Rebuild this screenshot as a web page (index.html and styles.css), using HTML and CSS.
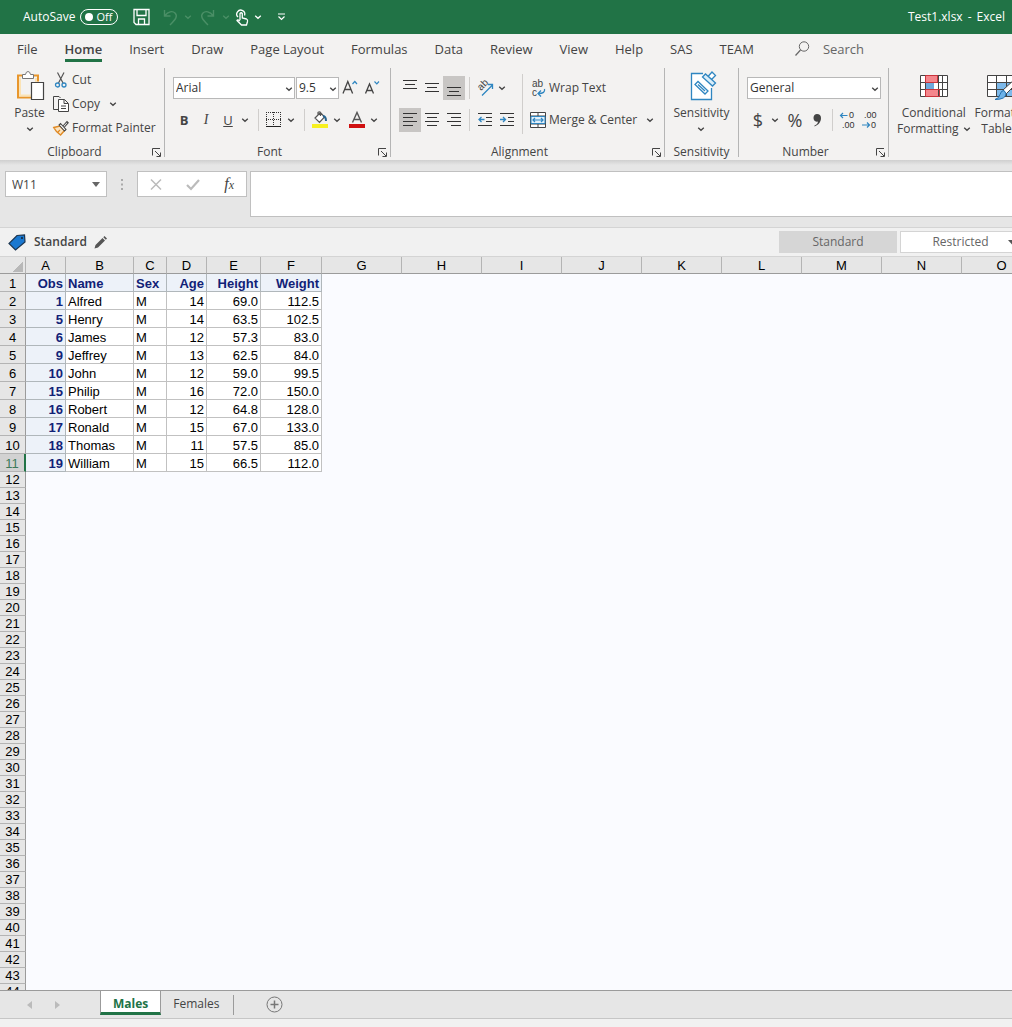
FILE: index.html
```
<!DOCTYPE html>
<html lang="en">
<head>
    <meta charset="UTF-8">
    <meta name="viewport" content="width=device-width, initial-scale=1.0">
    <title>Test1.xlsx - Excel</title>
    <link rel="stylesheet" href="styles.css">
</head>
<body>
    <svg class="sprite" aria-hidden="true">
        <symbol id="chevron" viewBox="0 0 8 8"><path d="M1.2 2.7 4 5.3 6.8 2.7" fill="none" stroke="currentColor" stroke-width="1.3"/></symbol>
        <symbol id="launcher" viewBox="0 0 9 9"><path d="M.5 7.5V.5H8M3 3l5 5M8.500 4.500v4h-4" fill="none" stroke="currentColor"/></symbol>
    </svg>

    <div class="app">
        <header class="titlebar">
            <label class="autosave">AutoSave
                <span class="toggle"><input type="checkbox"><span>Off</span></span>
            </label>
            <div class="quick-access">
                <button class="qa-save" aria-label="Save"><svg width="17" height="18" viewBox="0 0 17 18"><path d="M1 1.500h15v15H3l-2-2zM4 1.500v6h9v-6M5.500 16v-5h6v5" fill="none" stroke="currentColor" stroke-width="1.3"/></svg></button>
                <button class="dim" aria-label="Undo"><svg width="16" height="17" viewBox="0 0 16 17"><path d="M1.500 1v6h6M2 6.500C5 2.500 9.500 1.500 12 4c3 3 1 6-5 12" fill="none" stroke="currentColor" stroke-width="1.4"/></svg></button>
                <button class="dim" aria-label="Undo list"><svg width="8" height="8"><use href="#chevron"/></svg></button>
                <button class="dim" aria-label="Redo"><svg width="16" height="17" viewBox="0 0 16 17"><path d="M14.500 1v6h-6M14 6.500C11 2.500 6.500 1.500 4 4c-3 3-1 6 5 12" fill="none" stroke="currentColor" stroke-width="1.4"/></svg></button>
                <button class="dim" aria-label="Redo list"><svg width="8" height="8"><use href="#chevron"/></svg></button>
                <button aria-label="Touch mode"><svg width="14" height="17" viewBox="0 0 14 17"><path d="M3 8A4 4 0 1 1 9.500 6.500M5 11V4.500q1.200-1.500 2.300 0V9l4.200 1q1.500.5 1 2.500L11.500 16h-5L2 11.500q.5-1.500 3 .5" fill="none" stroke="currentColor" stroke-width="1.3"/></svg></button>
                <button aria-label="Touch mode list"><svg width="8" height="8"><use href="#chevron"/></svg></button>
                <button class="customize" aria-label="Customize toolbar"><svg width="9" height="8" viewBox="0 0 9 8"><path d="M1 1h7M1.500 3.500l3 3 3-3" fill="none" stroke="currentColor" stroke-width="1.2"/></svg></button>
            </div>
            <div class="doc-title"><span>Test1.xlsx</span><span>-</span><span>Excel</span></div>
        </header>

        <nav class="tabs">
            <button>File</button>
            <button class="active">Home</button>
            <button>Insert</button>
            <button>Draw</button>
            <button>Page Layout</button>
            <button>Formulas</button>
            <button>Data</button>
            <button>Review</button>
            <button>View</button>
            <button>Help</button>
            <button>SAS</button>
            <button>TEAM</button>
            <button class="search"><svg width="15" height="15" viewBox="0 0 15 15"><circle cx="9" cy="5.500" r="4.700" fill="none" stroke="currentColor"/><path d="M5.500 9 .5 14.500" stroke="currentColor" stroke-width="1.2"/></svg>Search</button>
        </nav>

        <section class="ribbon">
            <div class="group clipboard">
                <div class="group-body">
                    <button class="big paste">
                        <svg width="28" height="30" viewBox="0 0 28 30"><path d="M6 4.500H2v22h13M18 4.500h4v6" fill="none" stroke="#e8962c" stroke-width="2"/><path d="M4 6.500v18h11M20 7v4" fill="none" stroke="#fbe3b5" stroke-width="2"/><path d="M6.500 7.500v-4h3q.5-3 2.500-3t2.500 3h3v4z" fill="#fff" stroke="#777"/><path d="M15.500 11.500h12v17h-12z" fill="#fff" stroke="#444" stroke-width="1.2"/></svg>
                        <span>Paste</span>
                        <svg width="8" height="8"><use href="#chevron"/></svg>
                    </button>
                    <div class="stack">
                        <button class="tool"><svg width="16" height="16" viewBox="0 0 16 16"><path d="M4.500.5 10 11M11 .5 5.500 11" stroke="#555" stroke-width="1.2"/><circle cx="4.500" cy="13" r="2" fill="none" stroke="#2f86c1" stroke-width="1.3"/><circle cx="11" cy="13" r="2" fill="none" stroke="#2f86c1" stroke-width="1.3"/></svg>Cut</button>
                        <button class="tool"><svg width="16" height="16" viewBox="0 0 16 16"><path d="M5 13.500H.5V.5H6l1.500 1.500" fill="none" stroke="#444"/><path d="M5.500 3.500h6l4 4v8h-10zM11 3.500v4h4M8 10h5M8 12.500h5" fill="#fff" stroke="#444"/></svg>Copy<svg class="after" width="8" height="8"><use href="#chevron"/></svg></button>
                        <button class="tool"><svg width="16" height="16" viewBox="0 0 16 16"><path d="M.7 7.500 7 6l4.500 4.500L7.500 15Q3 12 .7 7.500z" fill="#fbe3c0" stroke="#e08a24" stroke-width="1.400"/><path d="M4.500 12.500 7 10" stroke="#e08a24" stroke-width="1.200"/><path d="m6 5 5.500 6L13 9.500l-5.500-6zM10 6l4-4.500 1.200 1.200L11.500 7" fill="#fff" stroke="#444" stroke-width="1.100"/></svg>Format Painter</button>
                    </div>
                </div>
                <div class="group-name"><span>Clipboard</span><button class="launcher" aria-label="Clipboard settings"><svg width="9" height="9"><use href="#launcher"/></svg></button></div>
            </div>

            <div class="group font">
                <div class="group-body rows">
                    <div class="row">
                        <div class="combo combo-font"><select aria-label="Font"><option>Arial</option></select><svg width="8" height="8"><use href="#chevron"/></svg></div>
                        <div class="combo combo-size"><select aria-label="Font size"><option>9.5</option></select><svg width="8" height="8"><use href="#chevron"/></svg></div>
                        <button class="ico" aria-label="Grow font"><svg width="16" height="16" viewBox="0 0 16 16"><path d="M1 13.500 5.800 1.500l4.800 12M2.800 9.500h6" fill="none" stroke="#444" stroke-width="1.300"/><path d="m10.500 4 2.300-2.500L15 4" fill="none" stroke="#2f86c1" stroke-width="1.200"/></svg></button>
                        <button class="ico" aria-label="Shrink font"><svg width="16" height="16" viewBox="0 0 16 16"><path d="m1.500 13.500 4-9.500 4 9.500M3 10.500h5" fill="none" stroke="#444" stroke-width="1.300"/><path d="m10.500 1.500 2.300 2.300L15 1.500" fill="none" stroke="#2f86c1" stroke-width="1.200"/></svg></button>
                    </div>
                    <div class="row">
                        <button class="ico letter bold">B</button>
                        <button class="ico letter italic">I</button>
                        <button class="ico letter underline">U</button>
                        <button class="drop" aria-label="Underline styles"><svg width="8" height="8"><use href="#chevron"/></svg></button>
                        <i class="sep"></i>
                        <button class="ico" aria-label="Borders"><svg width="16" height="16" viewBox="0 0 16 16"><path d="M0 .5h15M0 7.500h15M.5 0v13M7.500 0v13M14.500 0v13" stroke="#333" stroke-dasharray="1 1"/><path d="M0 14.500h15" stroke="#222"/></svg></button>
                        <button class="drop" aria-label="Border styles"><svg width="8" height="8"><use href="#chevron"/></svg></button>
                        <i class="sep"></i>
                        <button class="ico" aria-label="Fill color"><svg width="16" height="18" viewBox="0 0 16 18"><path d="M8.500 1.500 3 7l4.500 4.500L12.500 6zM6 4V1.500q1.500-1.500 2.500 0V5" fill="#fff" stroke="#555" stroke-width="1.200"/><path d="M11 5q3 .5 3 5" fill="none" stroke="#25638f" stroke-width="2"/><path d="M0 13h16v4H0z" fill="#f7f020"/></svg></button>
                        <button class="drop" aria-label="Fill colors"><svg width="8" height="8"><use href="#chevron"/></svg></button>
                        <button class="ico" aria-label="Font color"><svg width="16" height="18" viewBox="0 0 16 18"><path d="M3.500 11.500 8 1.500l4.500 10M5 8.500h6" fill="none" stroke="#555" stroke-width="1.400"/><path d="M0 13h16v4H0z" fill="#d01010"/></svg></button>
                        <button class="drop" aria-label="Font colors"><svg width="8" height="8"><use href="#chevron"/></svg></button>
                    </div>
                </div>
                <div class="group-name"><span>Font</span><button class="launcher" aria-label="Font settings"><svg width="9" height="9"><use href="#launcher"/></svg></button></div>
            </div>

            <div class="group alignment">
                <div class="group-body">
                    <div class="rows">
                        <div class="row">
                            <button class="ico" aria-label="Top align"><svg width="14" height="18" viewBox="0 0 14 18"><path d="M0 1.500h14M2 5.500h10M0 9.500h14" stroke="#333"/></svg></button>
                            <button class="ico" aria-label="Middle align"><svg width="14" height="18" viewBox="0 0 14 18"><path d="M0 4.500h14M2 8.500h10M0 12.500h14" stroke="#333"/></svg></button>
                            <button class="ico pressed" aria-label="Bottom align"><svg width="14" height="18" viewBox="0 0 14 18"><path d="M0 8.500h14M2 12.500h10M0 16.500h14" stroke="#333"/></svg></button>
                            <i class="sep"></i>
                            <button class="ico" aria-label="Orientation"><svg width="18" height="18" viewBox="0 0 18 18"><text x="0" y="0" transform="translate(5 12) rotate(-45)" class="glyph-ab">ab</text><path d="M6 16.500 16.500 6M12 5.500h4.500V10" fill="none" stroke="#2f86c1" stroke-width="1.300"/></svg></button>
                            <button class="drop" aria-label="Orientation list"><svg width="8" height="8"><use href="#chevron"/></svg></button>
                        </div>
                        <div class="row">
                            <button class="ico pressed" aria-label="Align left"><svg width="14" height="14" viewBox="0 0 14 14"><path d="M0 .5h14M0 4.500h10M0 8.500h14M0 12.500h10" stroke="#333"/></svg></button>
                            <button class="ico" aria-label="Center"><svg width="14" height="14" viewBox="0 0 14 14"><path d="M0 .5h14M2 4.500h10M0 8.500h14M2 12.500h10" stroke="#333"/></svg></button>
                            <button class="ico" aria-label="Align right"><svg width="14" height="14" viewBox="0 0 14 14"><path d="M0 .5h14M4 4.500h10M0 8.500h14M4 12.500h10" stroke="#333"/></svg></button>
                            <i class="sep"></i>
                            <button class="ico" aria-label="Decrease indent"><svg width="14" height="14" viewBox="0 0 14 14"><path d="M0 .5h14M8 4.500h6M8 8.500h6M0 12.500h14" stroke="#333"/><path d="M6.500 6.500H1M3.500 4 1 6.500 3.500 9" fill="none" stroke="#2f86c1" stroke-width="1.300"/></svg></button>
                            <button class="ico" aria-label="Increase indent"><svg width="14" height="14" viewBox="0 0 14 14"><path d="M0 .5h14M8 4.500h6M8 8.500h6M0 12.500h14" stroke="#333"/><path d="M0 6.500h5.500M3 4l2.500 2.500L3 9" fill="none" stroke="#2f86c1" stroke-width="1.300"/></svg></button>
                        </div>
                    </div>
                    <i class="sep tall"></i>
                    <div class="rows">
                        <div class="row"><button class="tool"><svg width="16" height="17" viewBox="0 0 16 17"><text x="2" y="7" class="glyph-ab">ab</text><text x="2" y="16" class="glyph-ab">c</text><path d="M14.500 9q1 4.500-6 4.500M11 10.500 8 13.500l3 3" fill="none" stroke="#2f86c1" stroke-width="1.300"/></svg>Wrap Text</button></div>
                        <div class="row"><button class="tool merge"><svg width="16" height="16" viewBox="0 0 16 16"><path d="M.5.500h15v15H.5z" fill="#fff" stroke="#444"/><path d="M.5 4h15M.5 12h15M8 .5V4M8 12v3.500" stroke="#444"/><path d="M1 4.500h14v7H1z" fill="#e3f1fb" stroke="#2f86c1"/><path d="M3 8h10M5 6 3 8l2 2M11 6l2 2-2 2" fill="none" stroke="#2f86c1" stroke-width="1.200"/></svg>Merge &amp; Center<svg class="after" width="8" height="8"><use href="#chevron"/></svg></button></div>
                    </div>
                </div>
                <div class="group-name"><span>Alignment</span><button class="launcher" aria-label="Alignment settings"><svg width="9" height="9"><use href="#launcher"/></svg></button></div>
            </div>

            <div class="group sensitivity">
                <div class="group-body">
                    <button class="big">
                        <svg width="28" height="30" viewBox="0 0 28 30"><path d="M16 2.500H4.500v26h20V17" fill="#fff" stroke="#2f86c1" stroke-width="1.300"/><path d="m8 13.500 3-3 10 9.500-3 3zM11 13.500l7 6.500" fill="#fff" stroke="#2f86c1" stroke-width="1.300"/><path d="m21 5.500 4-4.500 3.500 3.500-4 4z" fill="#fff" stroke="#2f86c1" stroke-width="1.300"/><path d="m15.500 6 3-3L28.500 12l-3 3z" fill="#d9edf9" stroke="#2f86c1" stroke-width="1.300"/></svg>
                        <span>Sensitivity</span>
                        <svg width="8" height="8"><use href="#chevron"/></svg>
                    </button>
                </div>
                <div class="group-name plain"><span>Sensitivity</span></div>
            </div>

            <div class="group number">
                <div class="group-body rows">
                    <div class="row">
                        <div class="combo combo-format"><select aria-label="Number format"><option>General</option></select><svg width="8" height="8"><use href="#chevron"/></svg></div>
                    </div>
                    <div class="row">
                        <button class="ico sign">$</button>
                        <button class="drop" aria-label="Currency list"><svg width="8" height="8"><use href="#chevron"/></svg></button>
                        <button class="ico sign">%</button>
                        <button class="ico" aria-label="Comma style"><svg width="8" height="14" viewBox="0 0 8 14"><path d="M4 1C6.500 1 8 2.500 8 5c0 4-2.500 7-6.500 8.500v-1C4 11.500 5 10 5 8.500 2 9.500.5 7 .5 4.800.5 2.500 2 1 4 1z" fill="#444"/></svg></button>
                        <i class="sep"></i>
                        <button class="ico" aria-label="Increase decimal"><svg width="16" height="16" viewBox="0 0 16 16"><text x="9" y="6" class="glyph-num">0</text><text x="2" y="16" class="glyph-num">.00</text><path d="M7.500 3.500H.5M3 1 .5 3.500 3 6" fill="none" stroke="#2f86c1" stroke-width="1.200"/></svg></button>
                        <button class="ico" aria-label="Decrease decimal"><svg width="16" height="16" viewBox="0 0 16 16"><text x="2" y="6" class="glyph-num">.00</text><text x="9" y="16" class="glyph-num">0</text><path d="M0 13h7.500M5 10.500 7.500 13 5 15.500" fill="none" stroke="#2f86c1" stroke-width="1.200"/></svg></button>
                    </div>
                </div>
                <div class="group-name"><span>Number</span><button class="launcher" aria-label="Number settings"><svg width="9" height="9"><use href="#launcher"/></svg></button></div>
            </div>

            <div class="group styles">
                <div class="group-body">
                    <button class="big">
                        <svg width="28" height="30" viewBox="0 0 28 30"><path d="M.5 4.500h27v21H.5z" fill="#fff"/><path d="M6 4.500h12v7H6zM6 18.500h14v7H6z" fill="#f4868c"/><path d="M6 11.500h8v7H6z" fill="#6fa8dc"/><path d="M.5 4.500h27v21H.5zM.5 11.500h27M.5 18.500h27M5.500 4.500v21M18.500 4.500v21M22.500 4.500v21" fill="none" stroke="#444"/><path d="M5.500 4.500h12v7h-12zM5.500 18.500h14v7h-14z" fill="none" stroke="#c9343c"/></svg>
                        <span>Conditional</span>
                        <span>Formatting <svg width="8" height="8"><use href="#chevron"/></svg></span>
                    </button>
                    <button class="big">
                        <svg width="32" height="30" viewBox="0 0 32 30"><path d="M.5 4.500h29v21H.5z" fill="#fff"/><path d="M10 11.500h20v14H10z" fill="#7db9ea"/><path d="M.5 4.500h29v21H.5zM.5 11.500h29M.5 18.500h29M9.500 4.500v21M19.500 4.500v21" fill="none" stroke="#444"/><path d="M28 8 16 19l3 4L31 11z" fill="#fff" stroke="#444"/><path d="M8 28.500q4-1 5-5 1-4 4-4l2 3q0 6-11 6z" fill="#6cb2e8" stroke="#2672b0"/></svg>
                        <span>Format as</span>
                        <span>Table <svg width="8" height="8"><use href="#chevron"/></svg></span>
                    </button>
                </div>
            </div>
        </section>

        <section class="formula-bar">
            <div class="name-box">
                <input type="text" value="W11" aria-label="Name box">
                <button aria-label="Named ranges"><svg width="8" height="5" viewBox="0 0 8 5"><path d="M0 0h8L4 5z" fill="#666"/></svg></button>
            </div>
            <svg class="grip" width="3" height="11" viewBox="0 0 3 11"><path d="M0 0h2v2H0zM0 4.500h2v2H0zM0 9h2v2H0z" fill="#aaa"/></svg>
            <div class="entry-buttons">
                <button aria-label="Cancel"><svg width="12" height="11" viewBox="0 0 12 11"><path d="m1 .5 10 10M11 .5l-10 10" stroke="#bbb" stroke-width="1.500"/></svg></button>
                <button aria-label="Enter"><svg width="14" height="11" viewBox="0 0 14 11"><path d="m1 6 4 4 8-9" fill="none" stroke="#bbb" stroke-width="2.200"/></svg></button>
                <button class="fx" aria-label="Insert function">f<small>x</small></button>
            </div>
            <textarea aria-label="Formula bar"></textarea>
        </section>

        <section class="label-bar">
            <svg width="18" height="17" viewBox="0 0 18 17"><path d="M9 1.500 16.500 1l.5 7-9.500 8L1 9.500z" fill="#1a78d0" stroke="#1c3550" stroke-width="1.200"/><circle cx="14" cy="4" r="1" fill="#123"/></svg>
            <b>Standard</b>
            <button class="edit" aria-label="Edit label"><svg width="13" height="13" viewBox="0 0 13 13"><path d="m.5 12.500 1-3.500 7-7 2.500 2.500-7 7zM9.300 1.300 10.500 0 13 2.500l-1.200 1.200z" fill="#555"/></svg></button>
            <div class="labels">
                <button class="current">Standard</button>
                <button class="restricted"><span>Restricted</span><svg width="8" height="5" viewBox="0 0 8 5"><path d="M0 0h8L4 4.500z" fill="#555"/></svg></button>
            </div>
        </section>

        <main class="sheet">
            <table>
                <colgroup>
                    <col class="w-head"><col class="w-a"><col class="w-b"><col class="w-c"><col class="w-a"><col class="w-e"><col class="w-f">
                    <col span="9" class="w-default">
                </colgroup>
                <thead><tr id="letters"></tr></thead>
                <tbody id="cells"></tbody>
            </table>
        </main>

        <footer class="sheet-tabs">
            <button class="scroll" aria-label="Previous sheet"><svg width="5" height="8" viewBox="0 0 5 8"><path d="M5 0v8L0 4z" fill="#bbb"/></svg></button>
            <button class="scroll" aria-label="Next sheet"><svg width="5" height="8" viewBox="0 0 5 8"><path d="M0 0v8l5-4z" fill="#bbb"/></svg></button>
            <button class="sheet-tab selected">Males</button>
            <button class="sheet-tab">Females</button>
            <button class="add" aria-label="New sheet"><svg width="17" height="17" viewBox="0 0 17 17"><circle cx="8.500" cy="8.500" r="7.500" fill="none" stroke="#777"/><path d="M8.500 4.500v8M4.500 8.500h8" stroke="#777" stroke-width="1.500"/></svg></button>
        </footer>
        <div class="status"></div>
    </div>

    <script>
        const letters = ["A", "B", "C", "D", "E", "F", "G", "H", "I", "J", "K", "L", "M", "N", "O"];
        const data = [
            ["Obs", "Name", "Sex", "Age", "Height", "Weight"],
            ["1", "Alfred", "M", "14", "69.0", "112.5"],
            ["5", "Henry", "M", "14", "63.5", "102.5"],
            ["6", "James", "M", "12", "57.3", "83.0"],
            ["9", "Jeffrey", "M", "13", "62.5", "84.0"],
            ["10", "John", "M", "12", "59.0", "99.5"],
            ["15", "Philip", "M", "16", "72.0", "150.0"],
            ["16", "Robert", "M", "12", "64.8", "128.0"],
            ["17", "Ronald", "M", "15", "67.0", "133.0"],
            ["18", "Thomas", "M", "11", "57.5", "85.0"],
            ["19", "William", "M", "15", "66.5", "112.0"]
        ];
        const activeRow = 11;
        const rowCount = 44;

        // Column letters
        document.getElementById("letters").innerHTML =
            '<th class="corner"></th>' + letters.map(l => `<th>${l}</th>`).join("");

        // Data rows first, then empty rows down to the bottom of the sheet
        let html = "";
        for (let r = 1; r <= rowCount; r++) {
            const values = data[r - 1];
            html += `<tr class="${values ? "filled" : "empty"}${r === activeRow ? " current-row" : ""}"><th>${r}</th>`;
            if (values) {
                values.forEach((value, c) => {
                    const header = r === 1 || c === 0;
                    const left = c === 1 || c === 2;
                    html += `<td class="${header ? "header" : "value"}${left ? " left" : ""}">${value}</td>`;
                });
                html += '<td class="blank" colspan="9"></td></tr>';
            } else {
                html += '<td class="blank" colspan="15"></td></tr>';
            }
        }
        document.getElementById("cells").innerHTML = html;
    </script>
</body>
</html>
```
FILE: styles.css
```
* {
    box-sizing: border-box;
}

body {
    margin: 0;
    font-family: "Open Sans", "Noto Sans", sans-serif;
    font-size: 12px;
    line-height: 16px;
    color: #444;
    background: #e6e6e6;
}

button {
    padding: 0;
    border: none;
    background: none;
    color: inherit;
    font: inherit;
    white-space: nowrap;
}

button svg {
    display: block;
    flex: none;
    overflow: visible;
}

.sprite {
    display: none;
}

.app {
    display: flex;
    flex-direction: column;
    height: 100vh;
    overflow: hidden;
}

/* Title bar */
.titlebar {
    flex: none;
    display: flex;
    align-items: center;
    height: 34px;
    padding: 0 7px 0 23px;
    background: #217346;
    color: #fff;
}

.autosave {
    display: flex;
    align-items: center;
    gap: 5px;
}

.toggle {
    position: relative;
    display: flex;
    justify-content: flex-end;
    align-items: center;
    width: 38px;
    height: 16px;
    padding-right: 5px;
    border: 1px solid #fff;
    border-radius: 8px;
    font-size: 11px;
}

.toggle input {
    position: absolute;
    left: 4px;
    top: 3px;
    width: 8px;
    height: 8px;
    margin: 0;
    appearance: none;
    border-radius: 50%;
    background: #fff;
}

.quick-access {
    display: flex;
    align-items: center;
    gap: 5px;
    margin-left: 15px;
}

.qa-save {
    margin-right: 8px;
}

.quick-access .dim {
    color: #4a8f66;
}

.dim + .dim + .dim {
    margin-left: 2px;
}

.customize {
    margin-left: 10px;
}

.doc-title {
    display: flex;
    gap: 5px;
    margin-left: auto;
}

/* Ribbon tabs */
.tabs {
    flex: none;
    display: flex;
    gap: 27px;
    height: 34px;
    padding: 0 17px;
    background: #f3f2f1;
    font-size: 13px;
}

.tabs button {
    height: 28px;
    padding-top: 4px;
    border-bottom: 3px solid transparent;
}

.tabs .active {
    border-color: #217346;
    font-weight: 600;
}

.tabs .search {
    display: flex;
    align-items: center;
    gap: 13px;
    margin-left: 14px;
    color: #666;
}

/* Ribbon */
.ribbon {
    flex: none;
    display: flex;
    height: 92px;
    background: #f3f2f1;
    overflow: hidden;
}

.group {
    flex: none;
    display: flex;
    flex-direction: column;
    height: 89px;
    border-right: 1px solid #b5b5b5;
}

.group-body {
    flex: none;
    display: flex;
    height: 75px;
}

.clipboard {
    width: 165px;
    padding-left: 9px;
}

.font {
    width: 226px;
    padding-left: 8px;
}

.alignment {
    width: 274px;
    padding-left: 8px;
}

.sensitivity {
    width: 74px;
}

.sensitivity .group-body {
    justify-content: center;
}

.number {
    width: 150px;
    padding-left: 8px;
}

.styles {
    padding-left: 6px;
    border-right: none;
}

.group-name {
    flex: none;
    display: flex;
    align-items: center;
    justify-content: center;
    position: relative;
    height: 17px;
    padding-right: 24px;
}

.group-name.plain {
    padding-right: 0;
}

.launcher {
    position: absolute;
    right: 3px;
    top: 5px;
}

.big {
    display: flex;
    flex-direction: column;
    align-items: center;
    padding: 3px 2px 0;
}

.big > svg:first-child {
    margin-bottom: 4px;
}

.big span {
    display: flex;
    align-items: center;
    gap: 4px;
}

.big span + svg {
    margin-top: 4px;
}

.paste {
    width: 41px;
}

.tool {
    display: flex;
    align-items: center;
    gap: 3px;
    height: 24px;
    padding: 0 3px;
}

.tool .after {
    margin-left: 6px;
}

.rows {
    display: flex;
    flex-direction: column;
    padding-top: 4px;
}

.row {
    display: flex;
    align-items: center;
    height: 32px;
}

.ico {
    display: flex;
    align-items: center;
    justify-content: center;
    width: 22px;
    height: 24px;
}

.pressed {
    background: #c8c6c4;
}

.drop {
    display: flex;
    justify-content: center;
    width: 12px;
    margin-right: 3px;
}

.sep {
    width: 1px;
    height: 22px;
    margin: 0 4px;
    background: #d0cecc;
}

.sep.tall {
    height: 60px;
    margin-top: 6px;
}

.combo {
    position: relative;
    margin-right: 1px;
}

.combo select {
    display: block;
    width: 100%;
    height: 22px;
    padding: 0 2px;
    appearance: none;
    border: 1px solid #b8b8b8;
    border-radius: 0;
    background: #fff;
    color: #333;
    font: inherit;
}

.combo svg {
    position: absolute;
    right: 2px;
    top: 8px;
    pointer-events: none;
}

.combo-font {
    width: 122px;
}

.combo-size {
    width: 43px;
    margin-right: 0;
}

.combo-format {
    width: 134px;
}

.letter {
    font-size: 13px;
}

.bold {
    font-weight: 700;
}

.italic {
    font-family: "Liberation Serif", serif;
    font-style: italic;
    font-size: 14px;
}

.underline {
    text-decoration: underline;
}

.sign {
    font-size: 18px;
}

.glyph-ab {
    font-family: "Liberation Sans", Arial, sans-serif;
    font-size: 10px;
    fill: #444;
}

.glyph-num {
    font-family: "Liberation Sans", Arial, sans-serif;
    font-size: 9px;
    fill: #333;
}

/* Formula bar */
.formula-bar {
    flex: none;
    display: flex;
    align-items: flex-start;
    height: 67px;
    padding: 11px 0 0 5px;
    background: linear-gradient(#cfcfcf, #e6e6e6 5px);
}

.name-box {
    display: flex;
    align-items: center;
    width: 102px;
    height: 26px;
    padding-right: 6px;
    border: 1px solid #c0c0c0;
    background: #fff;
}

.name-box input {
    flex: 1;
    min-width: 0;
    padding: 1px 6px 0;
    border: none;
    color: #444;
    font: inherit;
}

.grip {
    margin: 8px 13px 0 14px;
}

.entry-buttons {
    display: flex;
    align-items: center;
    justify-content: space-between;
    width: 110px;
    height: 26px;
    padding: 0 12px;
    border: 1px solid #c0c0c0;
    background: #fff;
}

.fx {
    font-family: "Liberation Serif", serif;
    font-style: italic;
    font-size: 16px;
}

.fx small {
    font-size: 12px;
}

.formula-bar textarea {
    flex: 1;
    height: 46px;
    margin-left: 3px;
    border: 1px solid #c0c0c0;
    border-right: none;
    background: #fff;
    resize: none;
}

/* Sensitivity label bar */
.label-bar {
    flex: none;
    display: flex;
    align-items: center;
    height: 30px;
    padding-left: 8px;
    border-top: 1px solid #d4d4d4;
    border-bottom: 1px solid #d4d4d4;
    background: #f1f1f1;
    overflow: hidden;
}

.label-bar b {
    margin-left: 8px;
    font-weight: 600;
}

.edit {
    margin-left: 7px;
}

.labels {
    display: flex;
    gap: 3px;
    margin: 0 -16px 0 auto;
    color: #666;
}

.current {
    width: 118px;
    height: 22px;
    background: #d6d6d6;
}

.restricted {
    display: flex;
    align-items: center;
    width: 128px;
    height: 22px;
    padding-right: 11px;
    border: 1px solid #d4d4d4;
    background: #fff;
}

.restricted span {
    flex: 1;
    padding-left: 12px;
}

/* Grid */
.sheet {
    flex: 1;
    min-height: 0;
    background: #fafbff;
    overflow: hidden;
}

.sheet table {
    width: 1042px;
    table-layout: fixed;
    border-collapse: separate;
    border-spacing: 0;
    font-family: "Liberation Sans", Arial, sans-serif;
    font-size: 13px;
    line-height: 15px;
    color: #000;
}

.w-head {
    width: 26px;
}

.w-a {
    width: 40px;
}

.w-b {
    width: 68px;
}

.w-c {
    width: 33px;
}

.w-e {
    width: 54px;
}

.w-f {
    width: 61px;
}

.w-default {
    width: 80px;
}

.sheet th,
.sheet td {
    padding: 0;
}

.sheet th {
    border-right: 1px solid #9b9b9b;
    border-bottom: 1px solid #b4b4b4;
    background: #e6e6e6;
    font-weight: 400;
}

.sheet thead th {
    height: 17px;
    border-right-color: #b4b4b4;
    border-bottom-color: #9b9b9b;
}

.sheet .corner {
    background: linear-gradient(135deg, transparent 50%, #b8b8b8 50%) no-repeat 13px 5px / 10px 10px #e6e6e6;
}

.sheet .filled th,
.sheet .filled td {
    height: 18px;
    padding-top: 2px;
}

.empty th,
.empty td {
    height: 16px;
}

.sheet .header,
.sheet .value {
    padding: 0 2px;
    border-right: 1px solid #c1c1c1;
    border-bottom: 1px solid #c1c1c1;
    background: #fff;
    text-align: right;
}

.sheet .header {
    border-color: #b0b7bb;
    background: #edf2f9;
    color: #112277;
    font-weight: 700;
}

.sheet .left {
    text-align: left;
}

.sheet .current-row th {
    border-right: 2px solid #217346;
    background: #d2d2d2;
    color: #3d7a5a;
}

/* Sheet tabs */
.sheet-tabs {
    flex: none;
    display: flex;
    align-items: center;
    height: 28px;
    padding-left: 27px;
    border-top: 1px solid #9b9b9b;
    background: #e6e6e6;
}

.scroll {
    width: 5px;
    margin-right: 23px;
}

.scroll + .sheet-tab {
    margin-left: 17px;
}

.sheet-tab {
    height: 20px;
    padding: 0 14px 2px 12px;
    border-right: 1px solid #9b9b9b;
}

.sheet-tab.selected {
    align-self: flex-start;
    height: 24px;
    padding: 4px 12px 0;
    border-left: 1px solid #9b9b9b;
    border-bottom: 3px solid #217346;
    background: #fff;
    color: #217346;
    font-weight: 700;
}

.add {
    margin-left: 32px;
}

.status {
    flex: none;
    height: 9px;
    border-top: 1px solid #c6c6c6;
    background: #f1f1f1;
}
```
